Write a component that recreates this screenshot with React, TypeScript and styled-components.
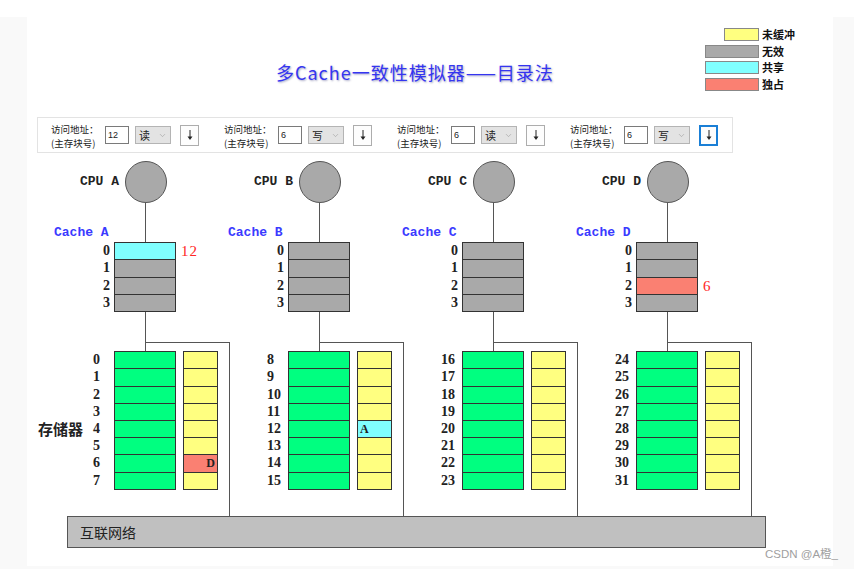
import React from 'react';
import styled, { createGlobalStyle } from 'styled-components';
import { ChevronDown } from 'lucide-react';

const GlobalStyle = createGlobalStyle`
  html, body {
    margin: 0;
    padding: 0;
    background: #f9f9f9;
  }
  * {
    box-sizing: border-box;
  }
`;

const SERIF = '"Liberation Serif", "Noto Sans CJK SC", serif';
const MONO = '"Liberation Mono", "Noto Sans CJK SC", monospace';
const CJK = '"Noto Sans CJK SC", "Liberation Sans", sans-serif';

const stateColors: Record<string, string> = {
  none: '#ffff80',
  invalid: '#a9a9a9',
  shared: '#80ffff',
  excl: '#fa8072',
};

const Root = styled.div`
  position: relative;
  width: 854px;
  height: 569px;
  border-top: 17px solid #fff;
  padding: 0 21px 0 27px;
`;

const Panel = styled.div`
  width: 806px;
  height: 549px;
  background: #fff;
  display: flex;
  flex-direction: column;
`;

const Header = styled.div`
  height: 100px;
  display: flex;
  align-items: flex-start;
`;

const Title = styled.h1`
  margin: 44px 0 0 249px;
  font: 400 18px/22px ${CJK};
  letter-spacing: 1px;
  color: #3535f0;
  text-shadow: 1px 1px 2px rgba(0, 0, 90, 0.35);
`;

const Legend = styled.div`
  margin: 11px 34px 0 auto;
  width: 94px;
  display: grid;
  grid-template-columns: 54px auto;
  column-gap: 3px;
  row-gap: 3.7px;
`;

const Swatch = styled.div<{ $color: string; $short?: boolean }>`
  justify-self: end;
  width: ${(p) => (p.$short ? 35 : 54)}px;
  height: 13px;
  background: ${(p) => p.$color};
  border: 1px solid #888;
`;

const LegendText = styled.span`
  font: 700 11px/13px ${CJK};
  color: #111;
`;

const ControlBar = styled.div`
  margin-left: 10px;
  width: 696px;
  height: 36px;
  border: 1px solid #e3e3e3;
  padding-left: 13px;
  display: flex;
  align-items: center;
  gap: 25px;
`;

const Group = styled.div`
  display: flex;
  align-items: center;
  width: 148px;
`;

const AddrLabel = styled.div`
  width: 55px;
  display: flex;
  flex-direction: column;
  margin-top: 1px;
`;

const AddrLine = styled.span`
  font: 400 9.5px/14px ${CJK};
  color: #222;
  white-space: nowrap;
`;

const AddrInput = styled.input`
  width: 24px;
  height: 18px;
  border: 1px solid #7a7a7a;
  padding: 0 0 0 2px;
  margin: 0;
  font: 400 9px ${'"Liberation Sans", sans-serif'};
  color: #222;
  background: #fff;
  outline: none;
`;

const OpSelect = styled.div`
  margin-left: 6px;
  width: 37px;
  height: 18px;
  border: 1px solid #b4b4b4;
  background: #e3e3e3;
  display: flex;
  align-items: center;
  justify-content: space-between;
  padding: 0 3px 0 3px;
  font: 400 11px ${CJK};
  color: #222;
`;

const StepButton = styled.button<{ $focused?: boolean }>`
  margin-left: 9px;
  width: 19px;
  height: 21px;
  padding: 0;
  background: #fdfdfd;
  border: ${(p) => (p.$focused ? '2px solid #1a7fd6' : '1px solid #adadad')};
  display: flex;
  align-items: center;
  justify-content: center;
`;

const Columns = styled.div`
  margin-top: 8px;
  padding-left: 13px;
  display: grid;
  grid-template-columns: repeat(4, 174px);
`;

const Column = styled.div`
  display: flex;
  flex-direction: column;
`;

const CpuRow = styled.div`
  height: 42px;
  display: flex;
  align-items: center;
`;

const CpuLabel = styled.div`
  width: 85px;
  padding-left: 40px;
  font: 700 13px/42px ${MONO};
  color: #222;
  white-space: pre;
`;

const CpuCircle = styled.div`
  width: 42px;
  height: 42px;
  border-radius: 50%;
  background: #a9a9a9;
  border: 1px solid #555;
`;

const StemRow = styled.div`
  height: 39px;
  display: flex;
`;

const CacheTitle = styled.div`
  width: 105px;
  padding: 0 0 1px 14px;
  align-self: flex-end;
  font: 700 13px/16px ${MONO};
  color: #3a3aff;
  white-space: pre;
`;

const Wire = styled.div<{ $h?: number }>`
  width: 1px;
  height: ${(p) => (p.$h ? `${p.$h}px` : 'auto')};
  background: #555;
`;

const CacheLine = styled.div`
  display: flex;
  align-items: center;
  & + & {
    margin-top: -1px;
  }
`;

const CacheNum = styled.div`
  width: 74px;
  padding-right: 4px;
  text-align: right;
  font: 700 14px/18px ${SERIF};
  color: #222;
`;

const Cell = styled.div<{ $state: string; $w: number; $h: number }>`
  width: ${(p) => p.$w}px;
  height: ${(p) => p.$h}px;
  background: ${(p) => stateColors[p.$state] || p.$state};
  border: 1px solid #333;
`;

const CacheTag = styled.div`
  margin-left: 5px;
  font: 400 15px/18px ${SERIF};
  letter-spacing: 1px;
  color: #ff2626;
`;

const Branch = styled.div`
  margin-left: 105px;
  width: 85px;
  height: 9px;
  border: 1px solid #555;
  border-bottom: none;
`;

const StemBox = styled.div`
  margin-left: 105px;
`;

const MemWrap = styled.div`
  width: 190px;
  border-right: 1px solid #555;
  padding-bottom: 26px;
  display: flex;
`;

const Side = styled.div`
  width: 53px;
  display: flex;
  align-items: center;
  padding-top: 17px;
`;

const SideLabel = styled.span`
  margin-left: -2px;
  font: 700 15px ${CJK};
  color: #222;
`;

const MemRows = styled.div`
  display: flex;
  flex-direction: column;
`;

const MemLine = styled.div`
  display: flex;
  & + & {
    margin-top: -1px;
  }
`;

const MemNum = styled.div`
  width: 21px;
  font: 700 14px/18px ${SERIF};
  color: #222;
`;

const DirCell = styled.div<{ $state: string; $align: string }>`
  margin-left: 7px;
  width: 35px;
  height: 18.2px;
  border: 1px solid #333;
  background: ${(p) => stateColors[p.$state]};
  font: 700 12px/16px ${SERIF};
  color: #222;
  text-align: ${(p) => p.$align};
  padding: 0 2px;
`;

const Bus = styled.div`
  margin-left: 40px;
  width: 699px;
  height: 32px;
  background: #c0c0c0;
  border: 1px solid #555;
  padding-left: 12px;
  font: 400 14px/30px ${CJK};
  color: #222;
`;

const Watermark = styled.div`
  position: absolute;
  right: 16px;
  top: 528px;
  font: 400 11.5px ${'"Liberation Sans", "Noto Sans CJK SC", sans-serif'};
  color: #a0a0a0;
`;

const DownArrow = () => (
  <svg width="8" height="12" viewBox="0 0 8 12">
    <line x1="4" y1="1" x2="4" y2="9" stroke="#222" strokeWidth="1" />
    <path d="M1.5 7.5 L4 11 L6.5 7.5 Z" fill="#222" />
  </svg>
);

interface Dir {
  state: string;
  mark: string;
  align: string;
}

interface Cpu {
  name: string;
  addr: string;
  op: string;
  cache: string[];
  tags: string[];
  dir: Record<number, Dir>;
}

const cpus: Cpu[] = [
  {
    name: 'A',
    addr: '12',
    op: '读',
    cache: ['shared', 'invalid', 'invalid', 'invalid'],
    tags: ['12', '', '', ''],
    dir: { 6: { state: 'excl', mark: 'D', align: 'right' } },
  },
  {
    name: 'B',
    addr: '6',
    op: '写',
    cache: ['invalid', 'invalid', 'invalid', 'invalid'],
    tags: ['', '', '', ''],
    dir: { 4: { state: 'shared', mark: 'A', align: 'left' } },
  },
  {
    name: 'C',
    addr: '6',
    op: '读',
    cache: ['invalid', 'invalid', 'invalid', 'invalid'],
    tags: ['', '', '', ''],
    dir: {},
  },
  {
    name: 'D',
    addr: '6',
    op: '写',
    cache: ['invalid', 'invalid', 'excl', 'invalid'],
    tags: ['', '', '6', ''],
    dir: {},
  },
];

const legend = [
  { color: stateColors.none, label: '未缓冲', short: true },
  { color: stateColors.invalid, label: '无效' },
  { color: stateColors.shared, label: '共享' },
  { color: stateColors.excl, label: '独占' },
];

const App: React.FC = () => {
  return (
    <Root>
      <GlobalStyle />
      <Panel>
        <Header>
          <Title>多Cache一致性模拟器——目录法</Title>
          <Legend>
            {legend.map((l) => (
              <React.Fragment key={l.label}>
                <Swatch $color={l.color} $short={l.short} />
                <LegendText>{l.label}</LegendText>
              </React.Fragment>
            ))}
          </Legend>
        </Header>

        <ControlBar>
          {cpus.map((c, i) => (
            <Group key={c.name}>
              <AddrLabel>
                <AddrLine>访问地址：</AddrLine>
                <AddrLine>(主存块号)</AddrLine>
              </AddrLabel>
              <AddrInput readOnly value={c.addr} />
              <OpSelect>
                <span>{c.op}</span>
                <ChevronDown size={9} color="#9a9a9a" strokeWidth={1.5} />
              </OpSelect>
              <StepButton $focused={i === 3}>
                <DownArrow />
              </StepButton>
            </Group>
          ))}
        </ControlBar>

        <Columns>
          {cpus.map((c, ci) => (
            <Column key={c.name}>
              <CpuRow>
                <CpuLabel>{`CPU ${c.name}`}</CpuLabel>
                <CpuCircle />
              </CpuRow>
              <StemRow>
                <CacheTitle>{`Cache ${c.name}`}</CacheTitle>
                <Wire />
              </StemRow>
              {c.cache.map((s, r) => (
                <CacheLine key={r}>
                  <CacheNum>{r}</CacheNum>
                  <Cell $state={s} $w={62} $h={18.3} />
                  {c.tags[r] && <CacheTag>{c.tags[r]}</CacheTag>}
                </CacheLine>
              ))}
              <StemBox>
                <Wire $h={30} />
              </StemBox>
              <Branch />
              <MemWrap>
                <Side>{ci === 0 && <SideLabel>存储器</SideLabel>}</Side>
                <MemRows>
                  {Array.from({ length: 8 }, (_, r) => {
                    const d = c.dir[r];
                    return (
                      <MemLine key={r}>
                        <MemNum>{ci * 8 + r}</MemNum>
                        <Cell $state="#00ff80" $w={62} $h={18.2} />
                        <DirCell $state={d ? d.state : 'none'} $align={d ? d.align : 'left'}>
                          {d ? d.mark : ''}
                        </DirCell>
                      </MemLine>
                    );
                  })}
                </MemRows>
              </MemWrap>
            </Column>
          ))}
        </Columns>

        <Bus>互联网络</Bus>
      </Panel>
      <Watermark>CSDN @A橙_</Watermark>
    </Root>
  );
};

export default App;
